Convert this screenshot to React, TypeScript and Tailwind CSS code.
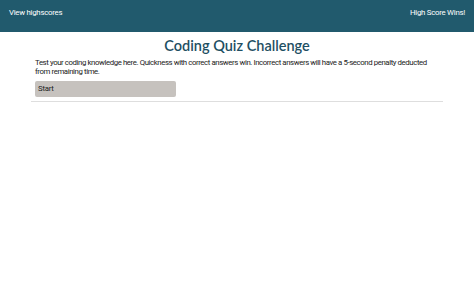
export default function App() {
  return (
    <div className="min-h-screen bg-white font-['Roboto',sans-serif]">
      <header className="flex h-[32px] items-start justify-between bg-[#215a6d] px-[9px] pt-[8px] text-[7.8px] leading-[10px] tracking-[-0.25px] text-white">
        <span>View highscores</span>
        <span>High Score Wins!</span>
      </header>

      <main className="mx-[31px]">
        <h1 className="pt-[4px] text-center font-['Lato',sans-serif] text-[14.5px] font-semibold leading-[20px] text-[#1e4f63]">
          Coding Quiz Challenge
        </h1>
        <div className="border-b border-[#dedede] px-[4px] pb-[4px]">
          <p className="mt-[2px] max-w-[396px] text-[7.8px] leading-[9px] tracking-[-0.4px] text-[#222]">
            Test your coding knowledge here. Quickness with correct answers win. Incorrect answers will have a 5-second penalty deducted from remaining time.
          </p>
          <button className="mt-[5px] flex h-[16px] w-[141px] items-center rounded-[2px] bg-[#c6c2be] px-[3px] text-[7.8px] tracking-[-0.25px] text-[#222]">
            Start
          </button>
        </div>
      </main>
    </div>
  );
}
